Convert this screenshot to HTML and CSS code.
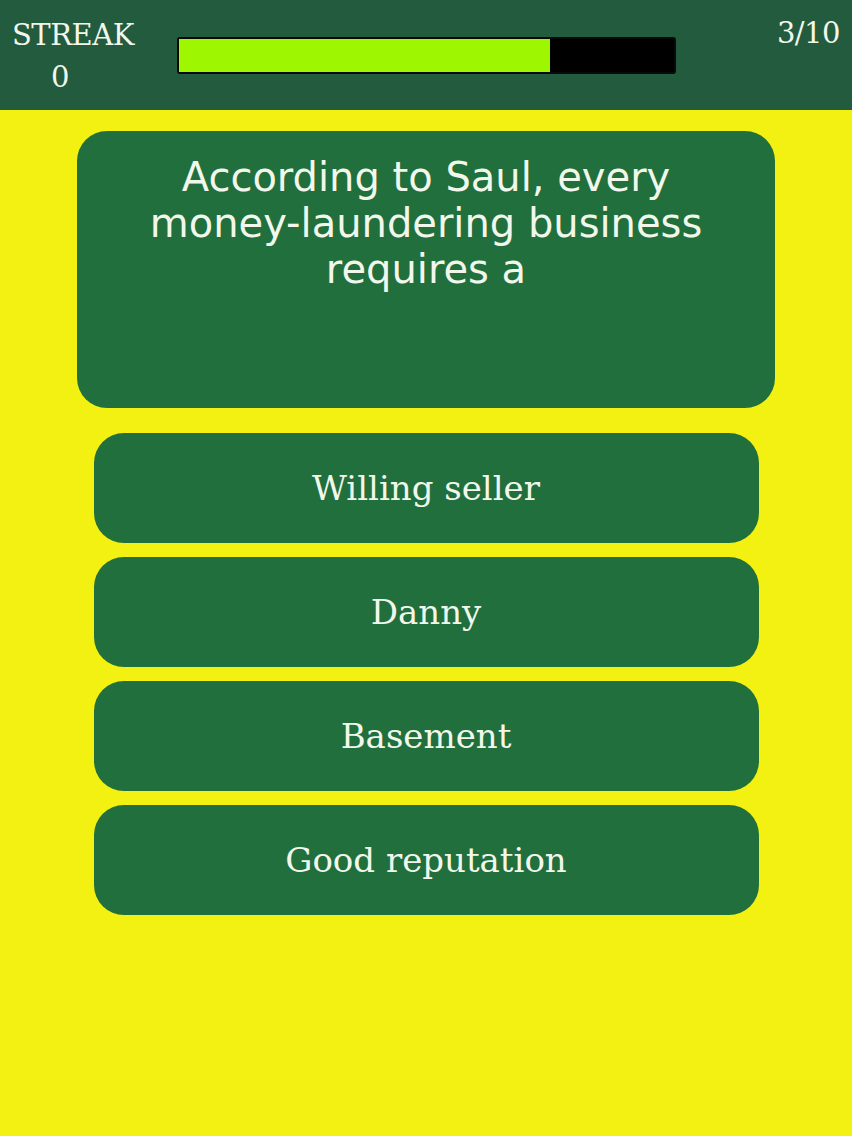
FILE: index.html
```html
<!DOCTYPE html>
<html lang="en">
<head>
    <meta charset="UTF-8">
    <meta name="viewport" content="width=device-width, initial-scale=1.0">
    <title>Quiz</title>
    <link rel="stylesheet" href="styles.css">
</head>
<body>
    <div class="top-bar">
        <div class="streak">
            <div class="streak-label">STREAK</div>
            <div class="streak-value">0</div>
        </div>
        <div class="progress">
            <div class="progress-fill" style="width: 75%;"></div>
        </div>
        <div class="count">3/10</div>
    </div>

    <div class="quiz">
        <div class="question">According to Saul, every money-laundering business requires a</div>
        <div class="answers">
            <button class="answer">Willing seller</button>
            <button class="answer">Danny</button>
            <button class="answer">Basement</button>
            <button class="answer">Good reputation</button>
        </div>
    </div>
</body>
</html>
```

FILE: styles.css
```css
body {
    margin: 0;
    padding: 0;
    background-color: #f3f111;
    font-family: 'DejaVu Serif', serif;
    color: #f2f7ec;
    min-height: 1136px;
}
.top-bar {
    height: 110px;
    background-color: #225b3d;
    display: flex;
    align-items: flex-start;
    box-sizing: border-box;
    padding: 14px 12px 0 12px;
}
.streak {
    width: 120px;
    font-size: 29px;
    line-height: 42px;
    letter-spacing: -0.5px;
}
.streak-label {
    text-align: center;
}
.streak-value {
    width: 96px;
    text-align: center;
}
.progress {
    margin: 23px 0 0 45px;
    width: 495px;
    height: 33px;
    background-color: #000;
    border: 2px solid #0a0a0a;
    border-radius: 3px;
}
.progress-fill {
    height: 100%;
    background-color: #9ef700;
}
.count {
    margin-left: auto;
    padding-top: 1px;
    font-size: 29px;
    line-height: 36px;
    letter-spacing: -0.5px;
}
.quiz {
    display: flex;
    flex-direction: column;
    align-items: center;
    padding-top: 21px;
}
.question {
    width: 698px;
    height: 277px;
    box-sizing: border-box;
    padding: 23px 40px 0;
    background-color: #216f3c;
    border-radius: 30px;
    text-align: center;
    font-family: 'DejaVu Sans', sans-serif;
    font-size: 40px;
    line-height: 46px;
}
.answers {
    margin-top: 25px;
    display: flex;
    flex-direction: column;
    gap: 14px;
}
.answer {
    width: 665px;
    height: 110px;
    border: none;
    border-radius: 30px;
    background-color: #216f3c;
    color: #f2f7ec;
    font-family: 'DejaVu Serif', serif;
    font-size: 34px;
    padding: 0;
    cursor: pointer;
}
```
